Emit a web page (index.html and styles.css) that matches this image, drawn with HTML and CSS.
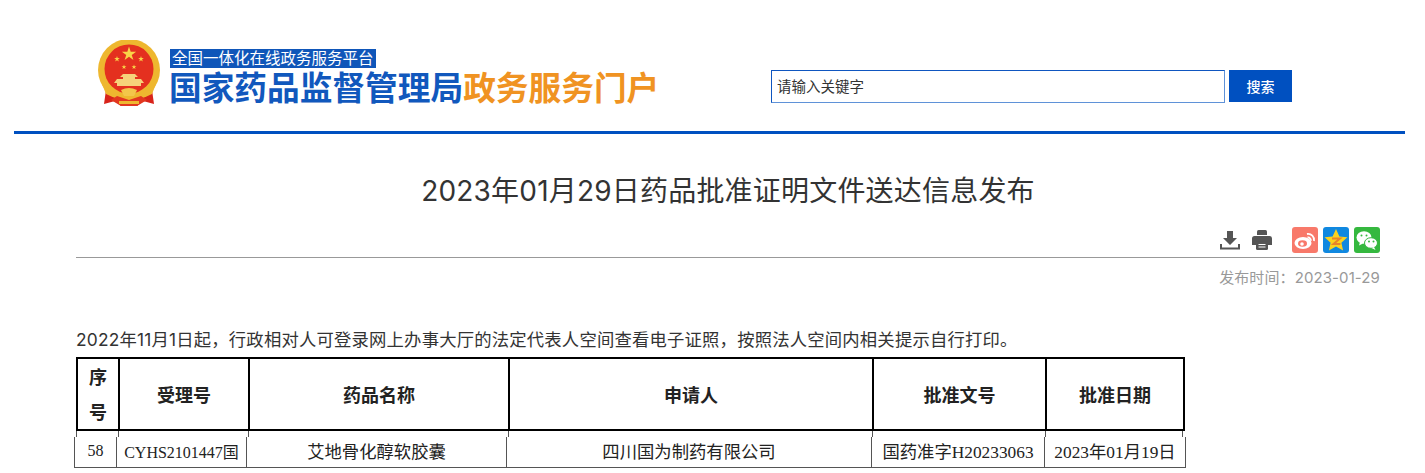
FILE: index.html
```html
<!DOCTYPE html>
<html lang="zh-CN">
<head>
    <meta charset="UTF-8">
    <title>2023年01月29日药品批准证明文件送达信息发布</title>
    <link rel="stylesheet" href="styles.css">
</head>
<body>
    <div class="header">
        <div class="logo">
            <svg class="emblem" width="64" height="68" viewBox="0 0 64 68">
                <defs>
                    <path id="star" d="M0-1L.225-.309H.951L.363.118.588.809 0 .382-.588.809-.363.118-.951-.309H-.225Z" fill="#f9d548"/>
                </defs>
                <path d="M9 50L7 64 18 61 24 66H40L46 61 57 64 55 50Z" fill="#d8231a"/>
                <circle cx="32" cy="30" r="31" fill="#eeb72f"/>
                <circle cx="32" cy="29" r="24.500" fill="#e4301f"/>
                <use href="#star" transform="translate(32 14) scale(7.500)"/>
                <use href="#star" transform="translate(20 19) scale(3)"/>
                <use href="#star" transform="translate(44 19) scale(3)"/>
                <use href="#star" transform="translate(27 27) scale(2.600)"/>
                <use href="#star" transform="translate(37 27) scale(2.600)"/>
                <path d="M26 34H38L41 37H38V39H44L47 43H44V46H20V43H17L20 39H26V37H23Z" fill="#f6d27a"/>
                <path d="M5 44Q32 64 59 44L55 54Q32 66 9 54Z" fill="#eeb72f"/>
                <path d="M24 50Q32 46 40 50L37 56H27Z" fill="#f3c64a"/>
                <path d="M14 60L20 56 32 60 44 56 50 60 40 66H24Z" fill="#e2371f"/>
                <path d="M22 61H42V64H22Z" fill="#eeb72f"/>
            </svg>
            <div class="logo-text">
                <span class="logo-sub">全国一体化在线政务服务平台</span>
                <div class="logo-main">国家药品监督管理局<em>政务服务门户</em></div>
            </div>
        </div>
        <div class="search">
            <input class="search-input" type="text" value="请输入关键字">
            <button class="search-btn">搜索</button>
        </div>
    </div>

    <div class="article">
        <h1 class="title">2023年01月29日药品批准证明文件送达信息发布</h1>
        <div class="tools">
            <svg class="tool" width="20" height="20" viewBox="0 0 20 20">
                <path d="M7 1h6v7h4l-7 7-7-7h4z" fill="#555"/>
                <path d="M1 14v4.500h18V14" fill="none" stroke="#555" stroke-width="2"/>
            </svg>
            <svg class="tool print" width="20" height="20" viewBox="0 0 20 20">
                <path d="M5 1.500Q5 0 6.500 0h7Q15 0 15 1.500V5H5z" fill="#555"/>
                <path d="M2.500 6h15A2.500 2.500 0 0 1 20 8.500V15h-4v-3H4v3H0V8.500A2.500 2.500 0 0 1 2.500 6z" fill="#555"/>
                <path d="M4 11.500h12v7Q16 20 14.500 20h-9Q4 20 4 18.500z" fill="#555"/>
                <path d="M6.500 14h7v1h-7zM6.500 16.500h7v1h-7z" fill="#fff"/>
            </svg>
            <span class="share weibo">
                <svg width="26" height="26" viewBox="0 0 26 26">
                    <ellipse cx="11" cy="16" rx="8.500" ry="6" fill="#fff"/>
                    <ellipse cx="10.500" cy="16.500" rx="4.500" ry="3.300" fill="#f8796a"/>
                    <circle cx="10" cy="17" r="1.800" fill="#fff"/>
                    <path d="M15 7a6 6 0 0 1 7 7M15.500 10.500a2.800 2.800 0 0 1 3.300 3.300" fill="none" stroke="#fff" stroke-width="1.800"/>
                </svg>
            </span>
            <span class="share qzone">
                <svg width="26" height="26" viewBox="0 0 26 26">
                    <path d="M13 2l3.400 7.400 8 .9-6 5.400 1.700 7.900L13 19.600l-7.100 4 1.700-7.900-6-5.400 8-.9z" fill="#fbd21e"/>
                    <path d="M9 11.500h8l-6.500 5.500h7" fill="none" stroke="#e8842a" stroke-width="2"/>
                </svg>
            </span>
            <span class="share wechat">
                <svg width="26" height="26" viewBox="0 0 26 26">
                    <ellipse cx="10" cy="10.500" rx="7.500" ry="6.300" fill="#fff"/>
                    <path d="M6 15l-1 3.500 4-2z" fill="#fff"/>
                    <ellipse cx="17" cy="16" rx="6.500" ry="5.300" stroke="#35b83f" fill="#fff"/>
                    <path d="M20 20l1.500 3-4-2z" fill="#fff"/>
                    <circle cx="7.500" cy="8.500" r="1" fill="#35b83f"/>
                    <circle cx="12.500" cy="8.500" r="1" fill="#35b83f"/>
                    <circle cx="15" cy="14.500" r="1" fill="#35b83f"/>
                    <circle cx="19.500" cy="14.500" r="1" fill="#35b83f"/>
                </svg>
            </span>
        </div>
        <div class="date">发布时间：2023-01-29</div>
        <p class="notice">2022年11月1日起，行政相对人可登录网上办事大厅的法定代表人空间查看电子证照，按照法人空间内相关提示自行打印。</p>

        <table class="head-table">
            <tr>
                <th class="c1">序<br>号</th>
                <th class="c2">受理号</th>
                <th class="c3">药品名称</th>
                <th class="c4">申请人</th>
                <th class="c5">批准文号</th>
                <th class="c6">批准日期</th>
            </tr>
        </table>
        <div class="ticks">
            <i class="c1"></i><i class="c2"></i><i class="c3"></i><i class="c4"></i><i class="c5"></i><i class="c6"></i>
        </div>
        <table class="body-table">
            <tr>
                <td class="d1 small">58</td>
                <td class="d2 small">CYHS2101447国</td>
                <td class="d3">艾地骨化醇软胶囊</td>
                <td class="d4">四川国为制药有限公司</td>
                <td class="d5">国药准字H20233063</td>
                <td class="d6">2023年01月19日</td>
            </tr>
        </table>
    </div>
</body>
</html>
```

FILE: styles.css
```css
html, body {
    margin: 0;
    padding: 0;
    background: #fff;
    height: 473px;
    overflow: hidden;
}
body {
    font-family: Inter, "Noto Sans CJK SC", sans-serif;
    color: #333;
}
.header {
    margin: 0 20px 0 14px;
    height: 131px;
    border-bottom: 3px solid #0050c0;
    display: flex;
    align-items: flex-start;
}
.logo {
    display: flex;
    margin: 40px 0 0 83px;
    width: 674px;
}
.emblem {
    flex: none;
}
.logo-text {
    margin: 9px 0 0 9px;
}
.logo-sub {
    display: block;
    width: max-content;
    background: #0f56b9;
    color: #fff;
    font-size: 15.500px;
    line-height: 19px;
    padding: 0 2px;
}
.logo-main {
    font-size: 32.700px;
    line-height: 34px;
    font-weight: 700;
    color: #1158bd;
    white-space: nowrap;
    margin: 3px 0 0 -1px;
}
.logo-main em {
    font-style: normal;
    color: #f09322;
}
.search {
    display: flex;
    margin-top: 70px;
}
.search-input {
    width: 454px;
    height: 33px;
    box-sizing: border-box;
    border: 1px solid #0f56c0;
    border-bottom-color: #5f92d8;
    border-right-color: #5f92d8;
    padding: 0 5px 2px;
    font-family: "Noto Sans CJK SC", sans-serif;
    font-size: 14.500px;
    color: #333;
    outline: none;
}
.search-btn {
    width: 63px;
    height: 32px;
    margin-left: 4px;
    border: none;
    background: #0050c0;
    color: #fff;
    font-family: "Noto Sans CJK SC", sans-serif;
    font-size: 14px;
    font-weight: 500;
    padding: 0;
}
.article {
    margin: 0 45px 0 76px;
}
.title {
    margin: 35px 0 0;
    text-align: center;
    font-size: 28px;
    line-height: 44px;
    font-weight: 400;
    letter-spacing: 0.200px;
    color: #333;
}
.tools {
    display: flex;
    justify-content: flex-end;
    align-items: center;
    height: 28px;
    margin-top: 13px;
    padding-bottom: 3px;
    border-bottom: 1px solid #999;
}
.tool {
    margin-right: 12px;
}
.print {
    margin-right: 20px;
}
.share {
    width: 26px;
    height: 26px;
    border-radius: 3px;
    margin-left: 5px;
    display: block;
}
.tool + .share {
    margin-left: 0;
}
.weibo { background: #f8796a; }
.qzone { background: #1088e0; }
.wechat { background: #35b83f; }
.date {
    text-align: right;
    font-size: 15px;
    line-height: 20px;
    margin-top: 10px;
    letter-spacing: 0.100px;
    color: #999;
}
.notice {
    margin: 40px 0 0;
    font-size: 17.330px;
    line-height: 24px;
    letter-spacing: 0.200px;
    color: #333;
    white-space: nowrap;
}
table {
    border-collapse: collapse;
    table-layout: fixed;
    color: #222;
}
.head-table {
    width: 1108px;
    margin-top: 5px;
}
.head-table th {
    border: 2px solid #000;
    font-family: "Noto Sans CJK SC", serif;
    font-size: 18px;
    font-weight: 700;
    line-height: 35px;
    padding: 0;
    height: 70px;
}
.c1 { width: 40px; }
.c2 { width: 128px; }
.c3 { width: 258px; }
.c4 { width: 362px; }
.c5 { width: 171px; }
.c6 { width: 136px; }
.ticks {
    display: flex;
    height: 6px;
    width: 1108px;
}
.ticks i {
    display: block;
    box-sizing: border-box;
    border-left: 1px solid #555;
}
.ticks .c1 { width: 42px; }
.ticks .c2 { width: 130px; }
.ticks .c3 { width: 260px; }
.ticks .c4 { width: 364px; }
.ticks .c5 { width: 173px; }
.ticks .c6 { width: 138px; border-right: 1px solid #555; }
.body-table {
    width: 1112px;
    margin-left: -2px;
    font-family: "Liberation Serif", "Noto Sans CJK SC", serif;
}
.body-table td {
    border: 1px solid #555;
    border-top: none;
    font-size: 17.330px;
    height: 27px;
    padding: 0 0 3px;
    text-align: center;
    white-space: nowrap;
}
.body-table .small {
    font-size: 16px;
}
.d1 { width: 41px; }
.d2 { width: 129px; }
.d3 { width: 259px; }
.d4 { width: 364px; }
.d5 { width: 172px; }
.d6 { width: 140px; }
```
